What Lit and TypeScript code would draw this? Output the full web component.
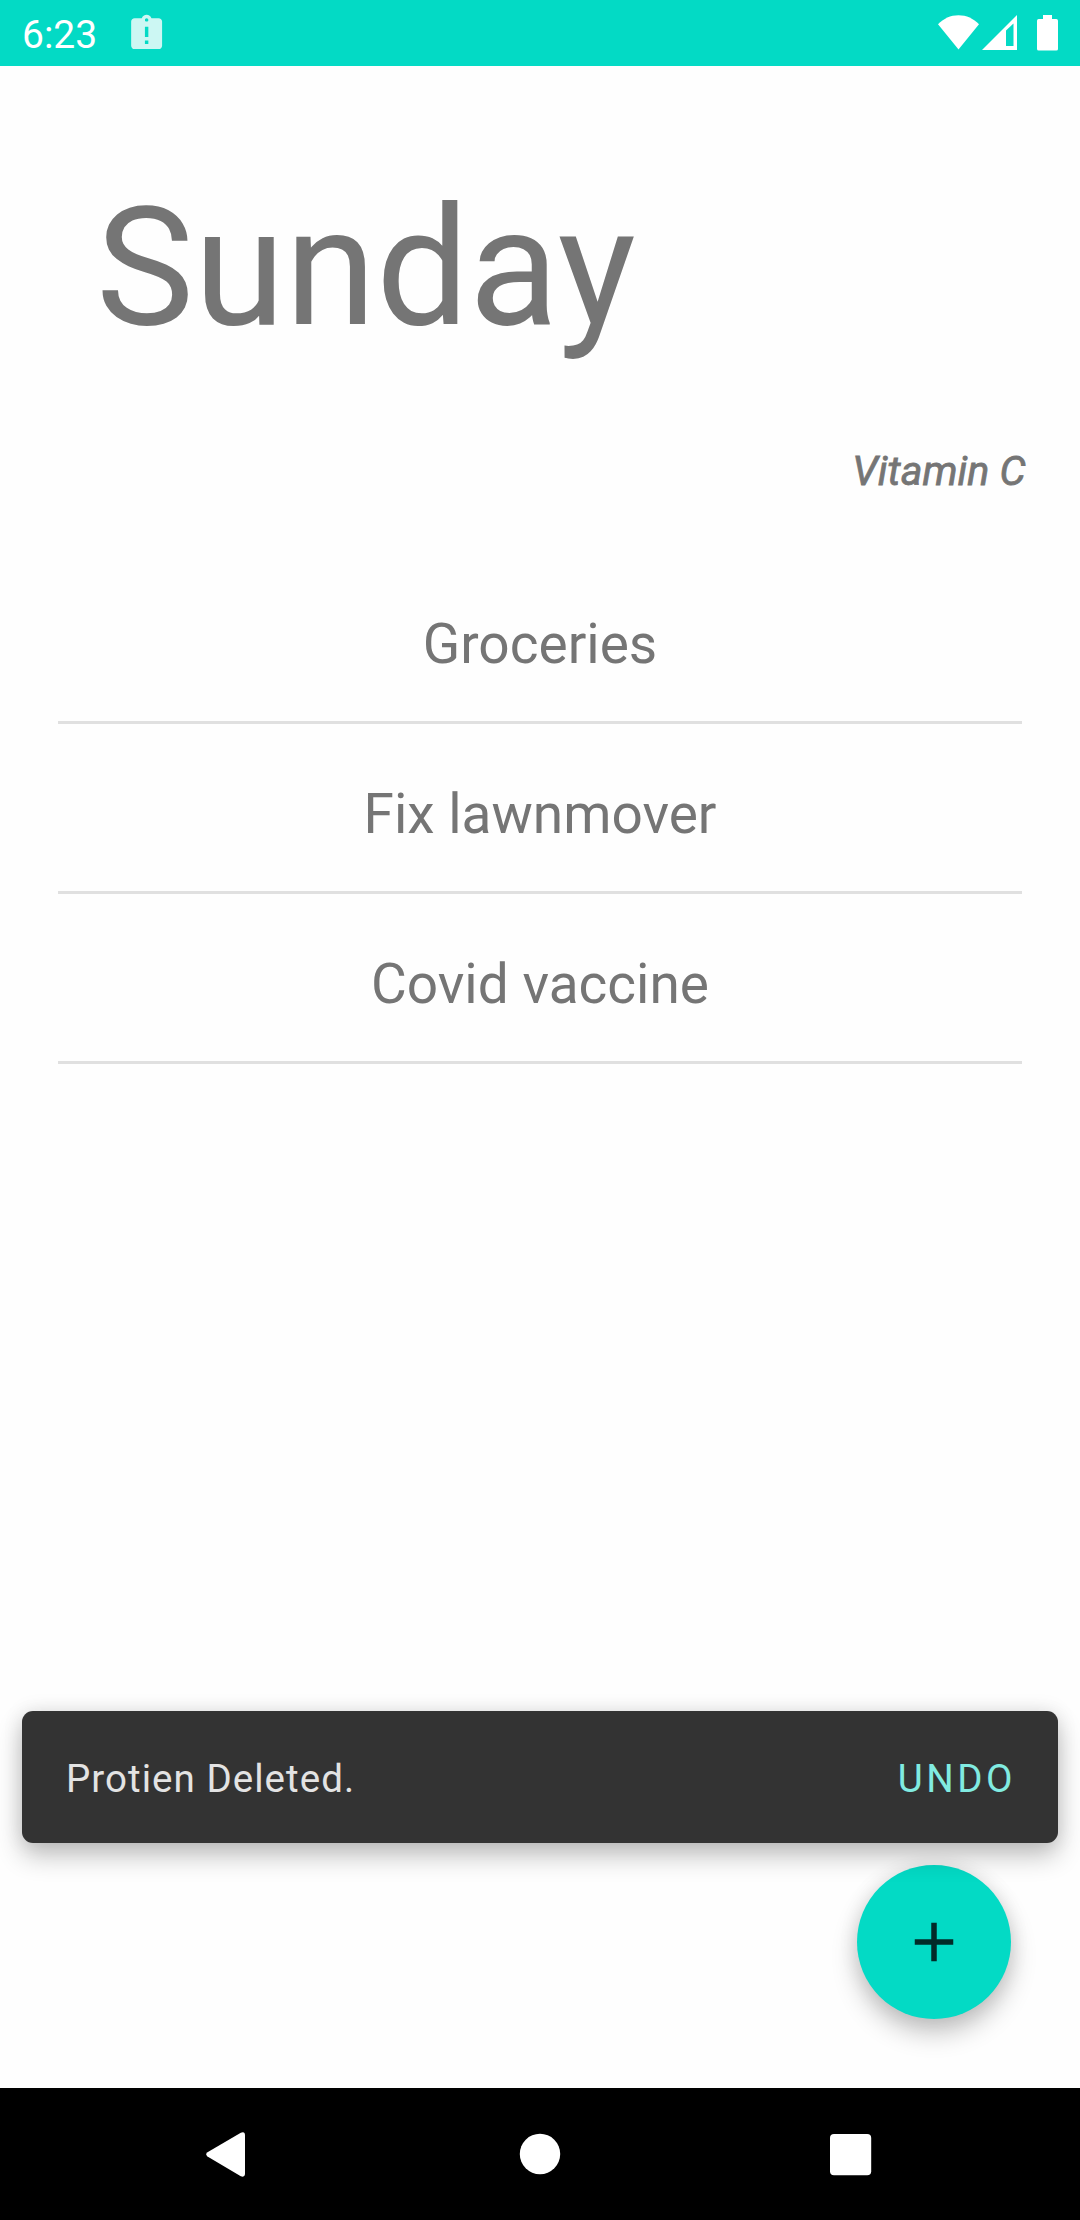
import { LitElement, html, css } from "lit";
import { customElement, property, state } from "lit/decorators.js";

@customElement("status-bar")
class StatusBar extends LitElement {
  @property() time = "";

  static styles = css`
    :host {
      display: flex;
      align-items: flex-start;
      height: 66px;
      flex: none;
      box-sizing: border-box;
      background: #03dac5;
      color: #fff;
    }
    .time {
      margin: 12px 0 0 22px;
      width: 104px;
      font-size: 39px;
      line-height: 46px;
    }
    .notice {
      margin-top: 13px;
      width: 41.25px;
      height: 41.25px;
      opacity: 0.8;
    }
    .signals {
      margin-left: auto;
      width: 144px;
      height: 66px;
    }
  `;

  render() {
    return html`
      <span class="time">${this.time}</span>
      <svg class="notice" viewBox="0 0 24 24" fill="#fff">
        <path d="M19 3h-4.180C14.400 1.840 13.300 1 12 1s-2.400.84-2.820 2H5c-1.100 0-2 .9-2 2v14c0 1.100.9 2 2 2h14c1.100 0 2-.9 2-2V5c0-1.100-.9-2-2-2zm-6 15h-2v-2h2v2zm0-4h-2V8h2v6zm-1-9c-.55 0-1-.45-1-1s.45-1 1-1 1 .45 1 1-.45 1-1 1z" />
      </svg>
      <svg class="signals" viewBox="936 0 144 66" fill="#fff">
        <path d="M958.500 49.500L938 24.200C943.500 18.500 950.500 15.200 958.500 15.200S973.500 18.500 979 24.200Z" />
        <path fill-rule="evenodd" d="M982 50L1017 15V50ZM1006 30.500V46H1013.500V23.500Z" />
        <path d="M1043 15h9v4h4.300a1.700 1.700 0 0 1 1.700 1.700v28.200a1.700 1.700 0 0 1-1.700 1.700h-17.600a1.700 1.700 0 0 1-1.700-1.700v-28.200a1.700 1.700 0 0 1 1.700-1.700h4.300z" />
      </svg>
    `;
  }
}

@customElement("task-list")
class TaskList extends LitElement {
  @property({ attribute: false }) tasks: string[] = [];

  static styles = css`
    :host {
      display: block;
      padding: 0 58px;
    }
    .row {
      box-sizing: border-box;
      height: 170px;
      padding-top: 58px;
      border-bottom: 3px solid #e0e0e0;
      text-align: center;
      font-size: 55px;
      line-height: 64px;
      color: #757575;
    }
  `;

  render() {
    return this.tasks.map((t) => html`<div class="row">${t}</div>`);
  }
}

@customElement("snack-bar")
class SnackBar extends LitElement {
  @property() message = "";
  @property() action = "";

  static styles = css`
    :host {
      display: flex;
      align-items: center;
      justify-content: space-between;
      box-sizing: border-box;
      height: 132px;
      padding: 4px 42px 0 44px;
      border-radius: 11px;
      background: #333;
      font-size: 38.5px;
      line-height: 46px;
      box-shadow: 0 13px 26px rgba(0, 0, 0, 0.24), 0 0 20px rgba(0, 0, 0, 0.1);
    }
    .message {
      color: #e3e3e3;
      letter-spacing: 1.04px;
    }
    .action {
      color: #81ebe1;
      letter-spacing: 3.5px;
    }
  `;

  render() {
    return html`
      <span class="message">${this.message}</span>
      <span class="action">${this.action}</span>
    `;
  }
}

@customElement("nav-bar")
class NavBar extends LitElement {
  static styles = css`
    :host {
      display: flex;
      align-items: center;
      justify-content: space-between;
      flex: none;
      box-sizing: border-box;
      height: 132px;
      padding: 0 196px;
      background: #000;
    }
    svg {
      width: 66px;
      height: 66px;
    }
  `;

  render() {
    return html`
      <svg viewBox="0 0 66 66" fill="#fff">
        <path d="M11.500 31.300L44.800 11.700Q49 10 49 14.200V52.600Q49 56.800 44.800 55.200L11.500 35.400Q8.800 33.300 11.500 31.300Z" />
      </svg>
      <svg viewBox="0 0 66 66" fill="#fff"><circle cx="33" cy="33" r="20.200" /></svg>
      <svg viewBox="0 0 66 66" fill="#fff"><rect x="12" y="13" width="41.200" height="41.200" rx="4" /></svg>
    `;
  }
}

@customElement("app-root")
class AppRoot extends LitElement {
  @state() private tasks = ["Groceries", "Fix lawnmover", "Covid vaccine"];

  static styles = css`
    :host {
      display: flex;
      flex-direction: column;
      width: 1080px;
      height: 2220px;
      overflow: hidden;
      background: #fefefe;
      color: #757575;
      font-family: Roboto, "Liberation Sans", sans-serif;
    }
    .screen {
      position: relative;
      flex: 1;
    }
    .day {
      margin: 0;
      padding: 105px 0 0 96px;
      font-size: 165px;
      font-weight: 400;
      line-height: 193px;
    }
    .note {
      margin: 83px 54.5px 59px 0;
      text-align: right;
      font-size: 41.25px;
      font-weight: 400;
      font-style: italic;
      line-height: 48px;
      -webkit-text-stroke: 0.8px #757575;
    }
    .fab {
      position: absolute;
      right: 69px;
      bottom: 69px;
      display: flex;
      align-items: center;
      justify-content: center;
      width: 154px;
      height: 154px;
      padding: 0;
      border: 0;
      border-radius: 50%;
      background: #03dac5;
      box-shadow: 0 14px 26px rgba(0, 0, 0, 0.23), 0 0 20px rgba(0, 0, 0, 0.09);
    }
    .plus {
      width: 66px;
      height: 66px;
    }
    .snack {
      position: absolute;
      left: 22px;
      right: 22px;
      bottom: 245px;
    }
  `;

  render() {
    return html`
      <status-bar time="6:23"></status-bar>
      <main class="screen">
        <h1 class="day">Sunday</h1>
        <p class="note">Vitamin C</p>
        <task-list .tasks=${this.tasks}></task-list>
        <button class="fab" aria-label="Add">
          <svg class="plus" viewBox="0 0 24 24" fill="#022b28">
            <path d="M19 13h-6v6h-2v-6H5v-2h6V5h2v6h6v2z" />
          </svg>
        </button>
        <snack-bar class="snack" message="Protien Deleted." action="UNDO"></snack-bar>
      </main>
      <nav-bar></nav-bar>
    `;
  }
}
